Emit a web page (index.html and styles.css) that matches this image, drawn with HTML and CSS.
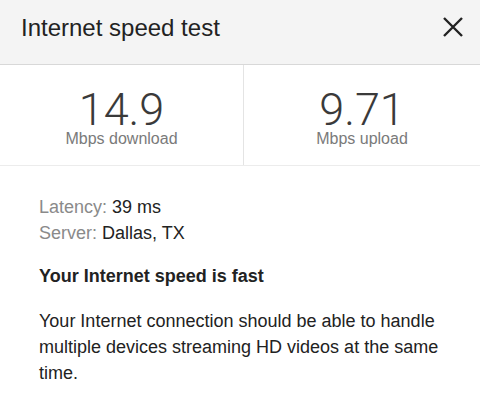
FILE: index.html
```html
<!DOCTYPE html>
<html>
<head>
<meta charset="utf-8">
<link rel="stylesheet" href="styles.css">
</head>
<body>
<div class="card">
  <header class="header">
    <h1 class="title">Internet speed test</h1>
    <svg class="close" width="20" height="20" viewBox="0 0 20 20" aria-label="Close">
      <path d="M1 1 L19 19 M19 1 L1 19" stroke="#222" stroke-width="2.4" stroke-linecap="butt" fill="none"/>
    </svg>
  </header>
  <section class="stats">
    <div class="stat stat-left">
      <div class="num">14.9</div>
      <div class="unit">Mbps download</div>
    </div>
    <div class="stat">
      <div class="num">9.71</div>
      <div class="unit">Mbps upload</div>
    </div>
  </section>
  <section class="details">
    <div class="meta">
      <div class="line"><span class="key">Latency:</span> 39 ms</div>
      <div class="line"><span class="key">Server:</span> Dallas, TX</div>
    </div>
    <h2 class="verdict">Your Internet speed is fast</h2>
    <p class="desc">Your Internet connection should be able to handle multiple devices streaming HD videos at the same time.</p>
  </section>
</div>
</body>
</html>
```
FILE: styles.css
```css
html, body {
  margin: 0;
  padding: 0;
  background: #fff;
}
body {
  font-family: "Liberation Sans", Arial, sans-serif;
  color: #222;
}
.card {
  width: 480px;
}
.header {
  box-sizing: border-box;
  height: 65px;
  display: flex;
  align-items: flex-start;
  padding: 14px 17px 0 21px;
  background: #f4f4f4;
  border-bottom: 1px solid #d8d8d8;
}
.title {
  margin: 0;
  font-size: 24px;
  line-height: 28px;
  font-weight: normal;
  color: #222;
}
.close {
  margin-left: auto;
  margin-top: 3px;
  display: block;
}
.stats {
  box-sizing: border-box;
  height: 101px;
  display: grid;
  grid-template-columns: 244px 1fr;
  border-bottom: 1px solid #ececec;
}
.stat {
  display: flex;
  flex-direction: column;
  align-items: center;
  padding-top: 25px;
}
.stat-left {
  border-right: 1px solid #e4e4e4;
}
.num {
  font-family: Roboto, "Liberation Sans", sans-serif;
  font-weight: 300;
  font-size: 45px;
  line-height: 40px;
  color: #3a3a3a;
}
.unit {
  font-size: 16px;
  line-height: 18px;
  color: #7a7a7a;
}
.details {
  padding: 28px 20px 0 39px;
  font-size: 18px;
  line-height: 26px;
}
.key {
  color: #8a8a8a;
}
.verdict {
  margin: 17px 0 0;
  font-size: 18px;
  line-height: 26px;
  font-weight: bold;
  color: #222;
}
.desc {
  margin: 19px 0 0;
  color: #222;
}
```
